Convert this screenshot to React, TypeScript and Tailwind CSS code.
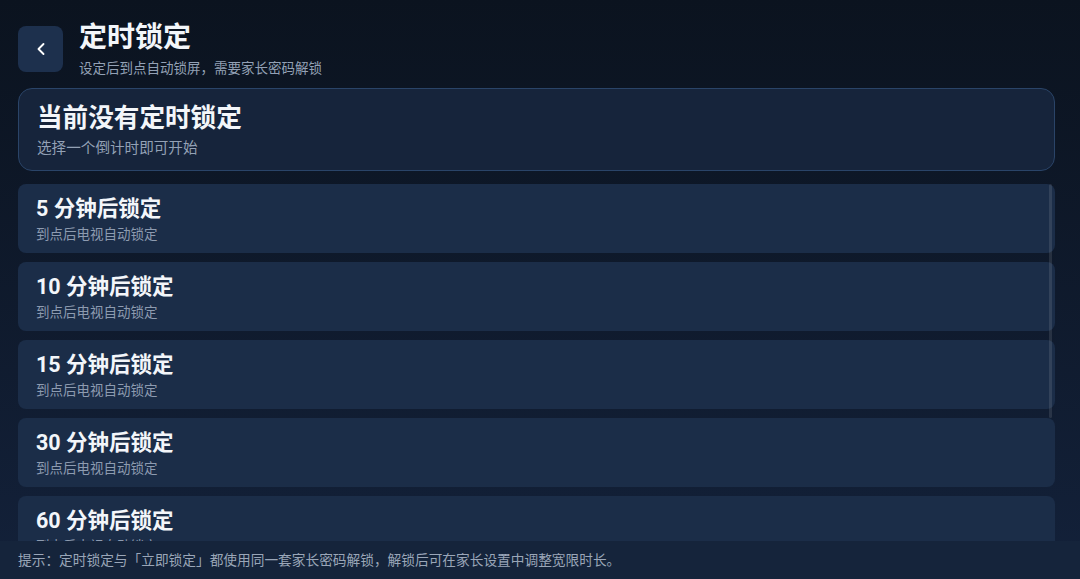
import { ChevronLeft } from "lucide-react";

const options = [5, 10, 15, 30, 60];

export default function App() {
  return (
    <div
      className="relative flex h-[579px] w-[1080px] flex-col overflow-hidden bg-gradient-to-b from-[#0b131f] to-[#13213a] text-white"
      style={{ fontFamily: 'Roboto, "Noto Sans CJK SC", sans-serif' }}
    >
      {/* header */}
      <div className="flex items-start gap-4 pl-[18px] pr-[25px] pt-[21px]">
        <button className="mt-[5px] flex h-[46px] w-[45px] items-center justify-center rounded-[8px] bg-[#1d304d] text-white">
          <ChevronLeft size={20} strokeWidth={2.25} />
        </button>
        <div className="flex flex-col">
          <h1 className="text-[28px] font-bold leading-[34px] text-[#f3f6fa]">定时锁定</h1>
          <p className="mt-[4px] text-[13.5px] leading-[18px] text-[#93a1b5]">设定后到点自动锁屏，需要家长密码解锁</p>
        </div>
      </div>

      {/* status card */}
      <div className="ml-[18px] mr-[25px] mt-[11px] rounded-[14px] border border-[#2a4468] bg-[#16243b] px-[18px] pb-[12px] pt-[12px]">
        <div className="text-[25.6px] font-bold leading-[34px] text-[#f3f6fa]">当前没有定时锁定</div>
        <div className="mt-[3px] text-[14.6px] leading-[20px] text-[#93a1b5]">选择一个倒计时即可开始</div>
      </div>

      {/* list */}
      <div className="relative mt-[13px] flex-1 overflow-hidden pl-[18px] pr-[25px]">
        <div className="flex flex-col gap-[9px]">
          {options.map((m) => (
            <div key={m} className="h-[69px] shrink-0 rounded-[8px] bg-[#1b2d48] px-[18px] pt-[12px]">
              <div className="text-[21.5px] font-bold leading-[26px] text-[#f3f6fa]">{m} 分钟后锁定</div>
              <div className="mt-[3px] text-[13.5px] leading-[18px] text-[#8d9bb0]">到点后电视自动锁定</div>
            </div>
          ))}
        </div>
        <div className="absolute right-[28px] top-0 h-[234px] w-[3px] rounded-full bg-[#ffffff]/10" />
      </div>

      {/* footer */}
      <div className="flex h-[38px] shrink-0 items-center bg-[#15243b] px-[18px] text-[13.7px] text-[#9aa6b8]">
        提示：定时锁定与「立即锁定」都使用同一套家长密码解锁，解锁后可在家长设置中调整宽限时长。
      </div>
    </div>
  );
}
